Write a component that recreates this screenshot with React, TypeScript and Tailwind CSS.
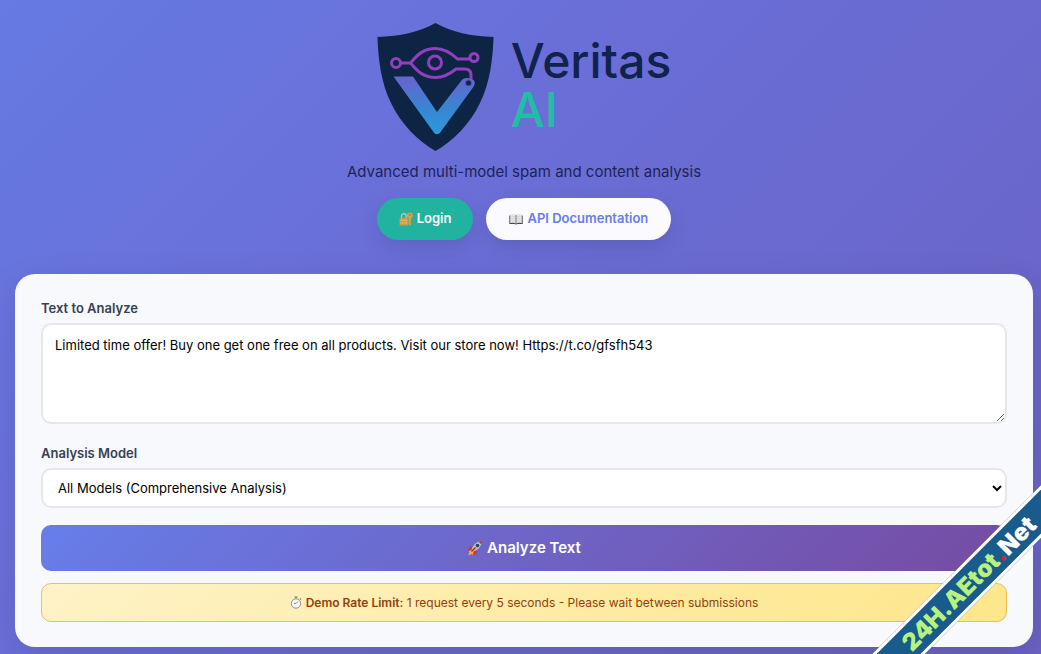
import { useState } from 'react'

const DEFAULT_TEXT =
  'Limited time offer! Buy one get one free on all products. Visit our store now! Https://t.co/gfsfh543'

function ShieldLogo() {
  return (
    <svg width="118" height="130" viewBox="0 0 118 130" fill="none" aria-hidden="true">
      <defs>
        <linearGradient id="vFill" x1="59" y1="53" x2="59" y2="113" gradientUnits="userSpaceOnUse">
          <stop stopColor="#6a62cf" />
          <stop offset="0.6" stopColor="#3588d2" />
          <stop offset="1" stopColor="#2d9bdb" />
        </linearGradient>
      </defs>
      <path
        d="M58.500 1C42 10 23 14.500 0.500 15C1 36 4 61 14 81C24 102 41 119 58.500 129C76 119 93 102 103 81C113 61 116 36 116.500 15C94 14.500 75 10 58.500 1Z"
        fill="#0d2444"
      />
      <path
        d="M16.500 54.500H36L60 90L84.500 58.500C87 55.500 91 55.500 95 57C98.500 58.500 98.500 62 96 65.500L63.500 110C61.500 113 58.500 113 56.500 110Z"
        fill="url(#vFill)"
      />
      <g stroke="#9040bd" strokeWidth="3">
        <circle cx="19" cy="41" r="4.500" />
        <path d="M23.500 41H33.500" />
        <path d="M93 37H80.500C73 30 67 26.500 58.500 26.500C47 26.500 41 32 33.500 41C41 50 47 55.500 58.500 55.500C67 55.500 73 52 79 47H88C92 47 94 49 94 53V57" />
        <circle cx="58" cy="40.500" r="6.500" />
        <circle cx="97" cy="35.500" r="4" fill="#0d2444" />
      </g>
      <circle cx="91.500" cy="61" r="3" fill="#0d2444" stroke="#5a4ec0" />
    </svg>
  )
}

function LockKeyIcon() {
  return (
    <svg width="14" height="14" viewBox="0 0 14 14" fill="none" aria-hidden="true">
      <path d="M2.500 6.500V4a2.300 2.300 0 0 1 4.600 0v2.500" stroke="#c3c8b4" strokeWidth="1.300" />
      <rect x="0.500" y="6" width="8.500" height="7.500" rx="1" fill="#c8a04a" />
      <path d="M1.500 8.300h6.500M1.500 11h6.500" stroke="#dfc27c" strokeWidth="0.800" />
      <path
        fillRule="evenodd"
        d="M10.800.5a2.900 2.900 0 0 0-1.300 5.500v6.300l1.300 1.400 1.200-1.200-.7-1 .9-.9-.9-1 .9-1V6A2.900 2.900 0 0 0 10.800.5zm0 1.300a.9.9 0 1 1 0 1.800.9.900 0 0 1 0-1.800z"
        fill="#e3a127"
      />
    </svg>
  )
}

function BookIcon() {
  return (
    <svg width="14" height="14" viewBox="0 0 14 14" fill="none" aria-hidden="true">
      <path d="M0.300 3.500h13.400V12H8l-1 .7L6 12H.3z" fill="#4b4b4f" />
      <path d="M1.200 2.500C4 1.700 6 2 7 3c1-1 3-1.300 5.800-.5V11C10 10.500 8 10.500 7 11.500 6 10.500 4 10.500 1.200 11z" fill="#e6e6e8" />
      <path d="M7 3v8.500" stroke="#77777b" />
      <path d="M2.500 4.500H6M2.500 6.500H6M2.500 8.500H6M8 4.500h3.500M8 6.500h3.500M8 8.500h3.500" stroke="#c9c9cd" strokeWidth="0.600" />
    </svg>
  )
}

function RocketIcon() {
  return (
    <svg width="16" height="16" viewBox="0 0 16 16" fill="none" aria-hidden="true">
      <path d="M4.500 10 1.500 11.500 2.500 12.500 1 15.500 4.500 14 5.500 15 7 11.500z" fill="#f7b32b" />
      <path d="M6.500 6C3.500 6 1.500 7.500 1 10.500l4-1zM10 9.500c.3 3-1 5-4 6l.8-4z" fill="#d3322e" />
      <path d="M4.500 9.500C6 5 9.500 1.500 15 1c-.5 5.500-4 9-8.500 10.500z" fill="#b9c2cb" />
      <path d="M11.500 1.700C12.600 1.200 13.800 1 15 1c0 1.200-.2 2.400-.7 3.500z" fill="#c9322e" />
      <circle cx="10.500" cy="5.500" r="1.800" fill="#27435f" />
      <path d="m4.500 11.500 4-4" stroke="#a52a2a" strokeWidth="1.500" />
    </svg>
  )
}

function StopwatchIcon() {
  return (
    <svg width="12" height="13" viewBox="0 0 12 13" fill="none" aria-hidden="true">
      <path d="M4.500 1h3M6 1v1.500M10 2.500l1 1" stroke="#77777b" strokeWidth="1.200" />
      <circle cx="6" cy="7.500" r="4.700" fill="#f5f5f5" stroke="#929296" />
      <path d="M6 7.500 8 5.500M6 7.500H4" stroke="#77777b" strokeWidth="0.800" />
    </svg>
  )
}

function Ribbon() {
  return (
    <div className="pointer-events-none absolute -right-[68px] bottom-[52px] flex h-[37px] w-[280px] -rotate-45 items-center justify-center border-y-[3px] border-white bg-[#195b8c] text-2xl font-black">
      <p className="text-[#b7f280]">
        24H.AEtot<span className="text-[#e0193c]">.</span>
        <span className="text-white">Net</span>
      </p>
    </div>
  )
}

export default function App() {
  const [text, setText] = useState(DEFAULT_TEXT)
  const [model, setModel] = useState('all')

  return (
    <main className="relative min-h-screen overflow-hidden bg-linear-[135deg,#667ae3_0%,#6a6fd8_35%,#6a61c2_100%] pt-[22px] pr-2 pb-[7px] pl-[15px] font-['Inter','Liberation_Sans',sans-serif]">
      <header className="flex flex-col items-center">
        <div className="flex items-center gap-4">
          <ShieldLogo />
          <h1 className="pb-1 text-5xl leading-[49px] font-medium text-[#10224d]">
            Veritas
            <span className="block text-[#20bfa5]">AI</span>
          </h1>
        </div>
        <p className="mt-2 text-[15px] leading-6 text-[#1c2456]">
          Advanced multi-model spam and content analysis
        </p>
        <nav className="mt-[14px] flex gap-[13px] text-[13px] font-semibold">
          <a
            href="#login"
            className="flex h-[42px] items-center gap-1 rounded-full bg-[#21b3a0] px-[22px] text-white shadow-[0_8px_20px_rgba(0,0,0,0.1)]"
          >
            <LockKeyIcon />
            Login
          </a>
          <a
            href="#docs"
            className="flex h-[42px] items-center gap-1 rounded-full bg-[#fafaff] px-[23px] text-[#667eea] shadow-[0_8px_20px_rgba(0,0,0,0.1)]"
          >
            <BookIcon />
            API Documentation
          </a>
        </nav>
      </header>

      <form
        onSubmit={e => e.preventDefault()}
        className="mt-[34px] flex flex-col rounded-[20px] bg-[#f8f9fd] px-[26px] pt-6 pb-[25px] shadow-[0_8px_32px_rgba(0,0,0,0.1)]"
      >
        <label htmlFor="text" className="mb-[5px] text-[13px] leading-5 font-semibold text-[#374151]">
          Text to Analyze
        </label>
        <textarea
          id="text"
          value={text}
          onChange={e => setText(e.target.value)}
          className="h-[101px] w-full resize-y rounded-[10px] border-2 border-[#e5e7ea] bg-white px-3 py-[10px] text-[13px] leading-5 text-black outline-none"
        />
        <label htmlFor="model" className="mt-[19px] mb-[5px] text-[13px] leading-5 font-semibold text-[#374151]">
          Analysis Model
        </label>
        <select
          id="model"
          value={model}
          onChange={e => setModel(e.target.value)}
          className="h-[40px] w-full rounded-[10px] border-2 border-[#e5e7ea] bg-white pl-[11px] text-[13px] text-black outline-none"
        >
          <option value="all">All Models (Comprehensive Analysis)</option>
        </select>
        <button
          type="submit"
          className="mt-[17px] flex h-[46px] items-center justify-center gap-1 rounded-[10px] bg-linear-[135deg,#667eea,#764ba2] text-[15px] font-semibold text-white"
        >
          <RocketIcon />
          Analyze Text
        </button>
        <div className="mt-3 flex h-[39px] items-center justify-center gap-1 rounded-[10px] border border-[#eabf55] bg-linear-[135deg,#fef3c7,#fde68a] text-xs text-[#92400e]">
          <StopwatchIcon />
          <p>
            <strong className="font-semibold">Demo Rate Limit:</strong> 1 request every 5 seconds - Please wait between
            submissions
          </p>
        </div>
      </form>

      <Ribbon />
    </main>
  )
}
